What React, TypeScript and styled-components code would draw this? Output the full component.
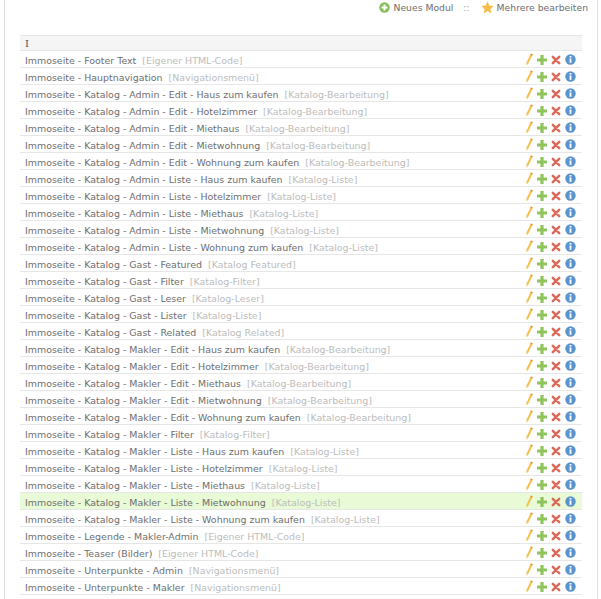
import React from "react";
import styled, {createGlobalStyle} from "styled-components";

const GlobalStyle = createGlobalStyle`
    html, body {
        margin: 0;
        padding: 0;
        background: #fff;
    }
`;

const Page = styled.div`
    box-sizing: border-box;
    width: 594px;
    height: 599px;
    overflow: hidden;
    margin-left: 4px;
    padding: 0 15px;
    border-left: 1px solid #d8d8d8;
    border-right: 1px solid #e2e2e2;
    font-family: "DejaVu Sans", sans-serif;
    font-size: 9.45px;
    color: #6e6e6e;
`;

const TopBar = styled.div`
    display: flex;
    justify-content: flex-end;
    align-items: center;
    box-sizing: border-box;
    height: 35px;
    padding-bottom: 21px;
    margin-right: -6px;
    font-size: 9.25px;
`;

const TopLink = styled.span`
    display: flex;
    align-items: center;
    gap: 3px;
`;

const Separator = styled.span`
    margin: 0 11px 0 10px;
    color: #a0a0a0;
`;

const Table = styled.div`
    display: flex;
    flex-direction: column;
`;

const HeaderRow = styled.div`
    box-sizing: border-box;
    height: 16px;
    line-height: 15px;
    padding-left: 5px;
    background: #f5f5f5;
    border-top: 1px solid #e6e6e6;
    border-bottom: 1px solid #e6e6e6;
    font-family: "DejaVu Serif", serif;
    font-size: 10px;
    color: #555;
`;

const Row = styled.div<{$active?: boolean}>`
    display: flex;
    align-items: center;
    justify-content: space-between;
    box-sizing: border-box;
    height: 17px;
    padding: 2px 6px 0 5px;
    border-bottom: 1px solid #e6e6e6;
    background: ${props => props.$active ? "#e8fad6" : "#fff"};
`;

const Name = styled.span`
    white-space: nowrap;
`;

const Kind = styled.span`
    margin-left: 6px;
    color: #bcbcbc;
`;

const Actions = styled.span`
    display: flex;
    align-items: center;
    gap: 4px;
    margin-top: -1px;
`;

const Pencil = () => (
    <svg width="7" height="13" viewBox="0 0 7 13">
        <path d="M5 .5 L6.8 1.2 L2.4 10.5 L.6 12.6 L.4 9.8 Z" fill="#f3c04f"/>
        <path d="M5 .5 L6.8 1.2 L6 2.8 L4.2 2.1 Z" fill="#e8963a"/>
    </svg>
);

const Plus = () => (
    <svg width="10" height="10" viewBox="0 0 10 10">
        <path d="M3.4 0 H6.6 V3.4 H10 V6.6 H6.6 V10 H3.4 V6.6 H0 V3.4 H3.4 Z" fill="#8fc35c"/>
    </svg>
);

const Cross = () => (
    <svg width="10" height="10" viewBox="0 0 10 10">
        <path d="M1.8 1.8 L8.2 8.2 M8.2 1.8 L1.8 8.2" stroke="#da6a5a" strokeWidth="2.5" strokeLinecap="round"/>
    </svg>
);

const Info = () => (
    <svg width="11" height="11" viewBox="0 0 11 11">
        <circle cx="5.5" cy="5.5" r="5.2" fill="#5a94cf"/>
        <rect x="4.6" y="2" width="1.8" height="1.6" fill="#fff"/>
        <rect x="4.6" y="4.5" width="1.8" height="4.4" fill="#fff"/>
    </svg>
);

const AddCircle = () => (
    <svg width="11" height="11" viewBox="0 0 11 11">
        <circle cx="5.5" cy="5.5" r="5.2" fill="#84bd58"/>
        <path d="M4.5 2.5 H6.5 V4.5 H8.5 V6.5 H6.5 V8.5 H4.5 V6.5 H2.5 V4.5 H4.5 Z" fill="#fff"/>
    </svg>
);

const Star = () => (
    <svg width="13" height="13" viewBox="0 0 13 13">
        <path d="M6.5 .5 L8.3 4.6 L12.7 5 L9.4 8 L10.4 12.4 L6.5 10.1 L2.6 12.4 L3.6 8 L.3 5 L4.7 4.6 Z" fill="#f6bd4a"/>
    </svg>
);

const modules: [string, string][] = [
    ["Immoseite - Footer Text", "Eigener HTML-Code"],
    ["Immoseite - Hauptnavigation", "Navigationsmenü"],
    ["Immoseite - Katalog - Admin - Edit - Haus zum kaufen", "Katalog-Bearbeitung"],
    ["Immoseite - Katalog - Admin - Edit - Hotelzimmer", "Katalog-Bearbeitung"],
    ["Immoseite - Katalog - Admin - Edit - Miethaus", "Katalog-Bearbeitung"],
    ["Immoseite - Katalog - Admin - Edit - Mietwohnung", "Katalog-Bearbeitung"],
    ["Immoseite - Katalog - Admin - Edit - Wohnung zum kaufen", "Katalog-Bearbeitung"],
    ["Immoseite - Katalog - Admin - Liste - Haus zum kaufen", "Katalog-Liste"],
    ["Immoseite - Katalog - Admin - Liste - Hotelzimmer", "Katalog-Liste"],
    ["Immoseite - Katalog - Admin - Liste - Miethaus", "Katalog-Liste"],
    ["Immoseite - Katalog - Admin - Liste - Mietwohnung", "Katalog-Liste"],
    ["Immoseite - Katalog - Admin - Liste - Wohnung zum kaufen", "Katalog-Liste"],
    ["Immoseite - Katalog - Gast - Featured", "Katalog Featured"],
    ["Immoseite - Katalog - Gast - Filter", "Katalog-Filter"],
    ["Immoseite - Katalog - Gast - Leser", "Katalog-Leser"],
    ["Immoseite - Katalog - Gast - Lister", "Katalog-Liste"],
    ["Immoseite - Katalog - Gast - Related", "Katalog Related"],
    ["Immoseite - Katalog - Makler - Edit - Haus zum kaufen", "Katalog-Bearbeitung"],
    ["Immoseite - Katalog - Makler - Edit - Hotelzimmer", "Katalog-Bearbeitung"],
    ["Immoseite - Katalog - Makler - Edit - Miethaus", "Katalog-Bearbeitung"],
    ["Immoseite - Katalog - Makler - Edit - Mietwohnung", "Katalog-Bearbeitung"],
    ["Immoseite - Katalog - Makler - Edit - Wohnung zum kaufen", "Katalog-Bearbeitung"],
    ["Immoseite - Katalog - Makler - Filter", "Katalog-Filter"],
    ["Immoseite - Katalog - Makler - Liste - Haus zum kaufen", "Katalog-Liste"],
    ["Immoseite - Katalog - Makler - Liste - Hotelzimmer", "Katalog-Liste"],
    ["Immoseite - Katalog - Makler - Liste - Miethaus", "Katalog-Liste"],
    ["Immoseite - Katalog - Makler - Liste - Mietwohnung", "Katalog-Liste"],
    ["Immoseite - Katalog - Makler - Liste - Wohnung zum kaufen", "Katalog-Liste"],
    ["Immoseite - Legende - Makler-Admin", "Eigener HTML-Code"],
    ["Immoseite - Teaser (Bilder)", "Eigener HTML-Code"],
    ["Immoseite - Unterpunkte - Admin", "Navigationsmenü"],
    ["Immoseite - Unterpunkte - Makler", "Navigationsmenü"],
];

export default function App() {
    return (
        <>
            <GlobalStyle/>
            <Page>
                <TopBar>
                    <TopLink><AddCircle/>Neues Modul</TopLink>
                    <Separator>::</Separator>
                    <TopLink><Star/>Mehrere bearbeiten</TopLink>
                </TopBar>
                <Table>
                    <HeaderRow>I</HeaderRow>
                    {modules.map(([name, kind]) => (
                        <Row key={name} $active={name.endsWith("Makler - Liste - Mietwohnung")}>
                            <Name>{name}<Kind>[{kind}]</Kind></Name>
                            <Actions><Pencil/><Plus/><Cross/><Info/></Actions>
                        </Row>
                    ))}
                </Table>
            </Page>
        </>
    );
}
